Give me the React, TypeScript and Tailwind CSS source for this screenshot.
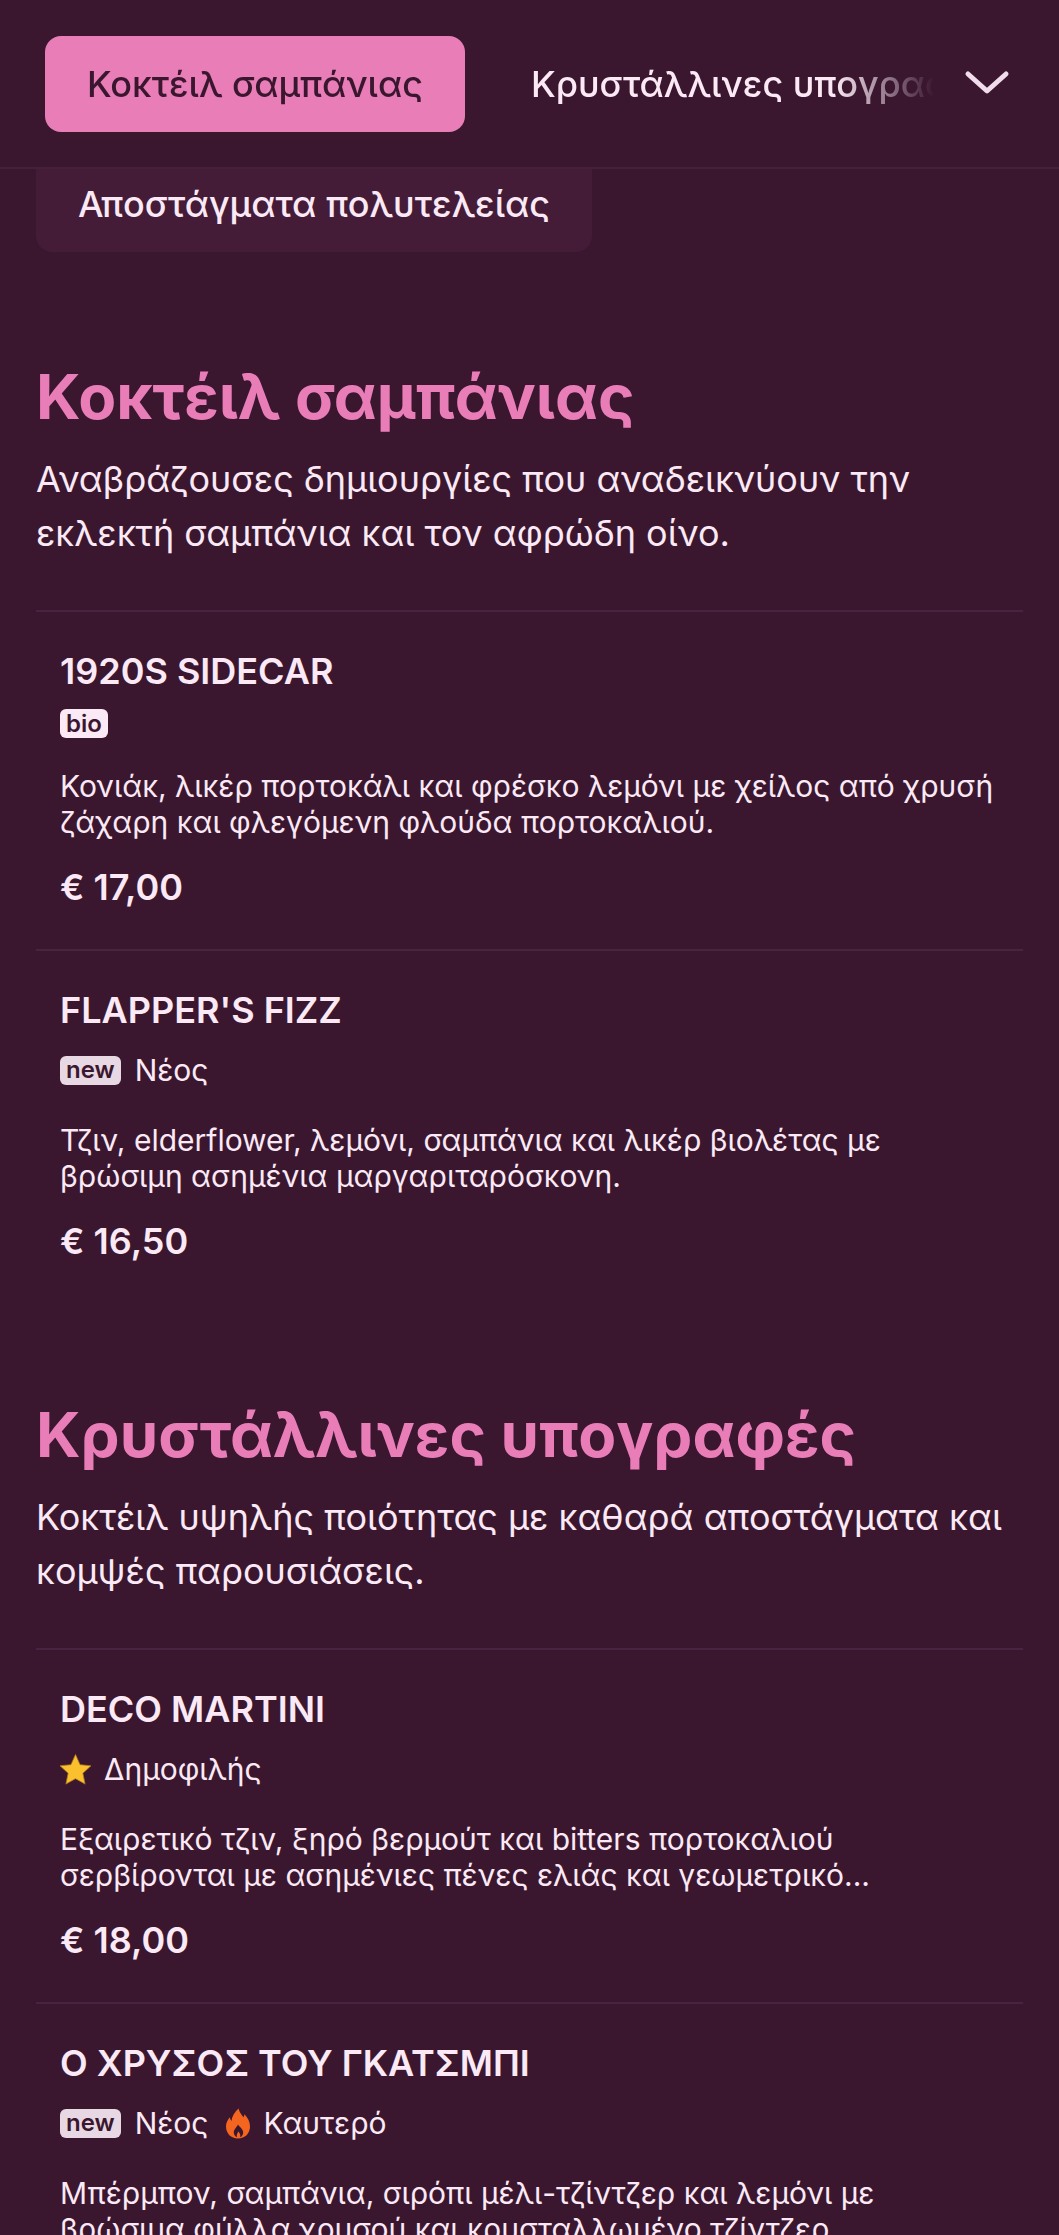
import React from "react";

type Tag = "bio" | "new" | "popular" | "hot";

type Item = {
  name: string;
  tags: Tag[];
  desc: string;
  price: string;
};

type Section = {
  title: string;
  intro: string;
  items: Item[];
};

const sections: Section[] = [
  {
    title: "Κοκτέιλ σαμπάνιας",
    intro:
      "Αναβράζουσες δημιουργίες που αναδεικνύουν την εκλεκτή σαμπάνια και τον αφρώδη οίνο.",
    items: [
      {
        name: "1920S SIDECAR",
        tags: ["bio"],
        desc: "Κονιάκ, λικέρ πορτοκάλι και φρέσκο λεμόνι με χείλος από χρυσή ζάχαρη και φλεγόμενη φλούδα πορτοκαλιού.",
        price: "€ 17,00",
      },
      {
        name: "FLAPPER'S FIZZ",
        tags: ["new"],
        desc: "Τζιν, elderflower, λεμόνι, σαμπάνια και λικέρ βιολέτας με βρώσιμη ασημένια μαργαριταρόσκονη.",
        price: "€ 16,50",
      },
    ],
  },
  {
    title: "Κρυστάλλινες υπογραφές",
    intro:
      "Κοκτέιλ υψηλής ποιότητας με καθαρά αποστάγματα και κομψές παρουσιάσεις.",
    items: [
      {
        name: "DECO MARTINI",
        tags: ["popular"],
        desc: "Εξαιρετικό τζιν, ξηρό βερμούτ και bitters πορτοκαλιού σερβίρονται με ασημένιες πένες ελιάς και γεωμετρικό...",
        price: "€ 18,00",
      },
      {
        name: "Ο ΧΡΥΣΟΣ ΤΟΥ ΓΚΑΤΣΜΠΙ",
        tags: ["new", "hot"],
        desc: "Μπέρμπον, σαμπάνια, σιρόπι μέλι-τζίντζερ και λεμόνι με βρώσιμα φύλλα χρυσού και κρυσταλλωμένο τζίντζερ.",
        price: "€ 19,00",
      },
    ],
  },
];

function Star() {
  return (
    <svg viewBox="1.5 1.5 21 21" className="h-[31px] w-[31px] shrink-0">
      <path
        d="M12 1.800l3.100 6.900 7.400.8-5.500 5 1.500 7.400L12 18.200l-6.500 3.700L7 14.500l-5.500-5 7.400-.8z"
        fill="#fbc02d"
        stroke="#a9791c"
        strokeWidth="0.5"
        strokeLinejoin="round"
      />
    </svg>
  );
}

function Flame() {
  return (
    <svg viewBox="0 0 24 30" className="h-[31px] w-[24px] shrink-0">
      <path
        fillRule="evenodd"
        d="M12.500 0c1 4.200 3.300 6.300 5 8.700.6-.9.9-1.800 1-2.900 3.200 3.400 5.500 7.500 5.500 12.200C24 25 19 30 12 30S0 25 0 18c0-3.600 1.700-6.800 3.800-9.200.2 1.500.7 2.700 1.600 3.600C6.100 7.700 8.700 3.300 12.500 0zM12 16c-1 2.400-4.200 4.600-4.200 8.100 0 2.200 1.500 4 3.300 4.700-.9-2.300.1-4.200 1.500-5.800.9 1.700 2.300 3.400 1.500 5.700 2-.7 3.100-2.500 3.100-4.600 0-3.500-3.500-5.300-5.200-8.100z"
        fill="#f4651f"
      />
    </svg>
  );
}

function TagView({ tag }: { tag: Tag }) {
  if (tag === "bio") {
    return (
      <span className="flex h-[29px] items-center rounded-[6px] bg-[#fbe9f5] px-[6px] text-[24px] font-semibold leading-none text-[#3a172f]">
        bio
      </span>
    );
  }
  if (tag === "new") {
    return (
      <span className="flex items-center gap-[14px]">
        <span className="flex h-[29px] items-center rounded-[6px] bg-[#e8d8e3] px-[6px] text-[24px] font-semibold leading-none text-[#3a172f]">
          new
        </span>
        <span>Νέος</span>
      </span>
    );
  }
  if (tag === "popular") {
    return (
      <span className="flex items-center gap-[13px]">
        <Star />
        <span>Δημοφιλής</span>
      </span>
    );
  }
  return (
    <span className="flex items-center gap-[13px]">
      <Flame />
      <span>Καυτερό</span>
    </span>
  );
}

function MenuItem({ item }: { item: Item }) {
  return (
    <div className="border-t-2 border-[#4a2340] px-[24px] pt-[39px] pb-[40px]">
      <h3 className="text-[36px] font-semibold leading-[40px] text-[#fbe9f5]">
        {item.name}
      </h3>
      <div className="mt-[18px] flex items-center gap-[18px] text-[30px] leading-[44px] text-[#fbe9f5]">
        {item.tags.map((t) => (
          <TagView key={t} tag={t} />
        ))}
      </div>
      <p className="mt-[30px] text-[30px] leading-[36px] text-[#fbe9f5]">
        {item.desc}
      </p>
      <div className="mt-[25px] text-[36px] font-semibold leading-[44px] text-[#fbe9f5]">
        {item.price}
      </div>
    </div>
  );
}

export default function App() {
  return (
    <div className="h-[2235px] w-[1059px] overflow-hidden bg-[#3a172f] font-['Inter',sans-serif]">
      <header className="relative z-10 flex h-[169px] items-center border-b-2 border-[#442039] bg-[#3a172f] pl-[45px] pr-[48px]">
        <div className="flex min-w-0 flex-1 gap-[24px] overflow-hidden [mask-image:linear-gradient(to_right,black_88%,transparent_99%)]">
          <button className="h-[96px] shrink-0 rounded-[16px] bg-[#e87db8] px-[42px] text-[36px] font-medium text-[#3a172f]">
            Κοκτέιλ σαμπάνιας
          </button>
          <button className="h-[96px] shrink-0 px-[42px] text-[36px] font-medium text-[#fbe9f5]">
            Κρυστάλλινες υπογραφές
          </button>
        </div>
        <svg viewBox="0 0 48 30" fill="none" className="ml-[20px] h-[30px] w-[48px] shrink-0">
          <path d="M5 5l19 17L43 5" stroke="#f0dcea" strokeWidth="5" strokeLinecap="round" strokeLinejoin="round" />
        </svg>
      </header>

      <main className="-mt-[13px] px-[36px]">
        <button className="h-[96px] rounded-[16px] bg-[#441c38] px-[42px] text-[36px] font-medium text-[#fbe9f5]">
          Αποστάγματα πολυτελείας
        </button>

        {sections.map((s, i) => (
          <section key={s.title} className={i === 0 ? "mt-[107px]" : "mt-[94px]"}>
            <h2 className="text-[62px] font-bold leading-[76px] text-[#e87db8]">
              {s.title}
            </h2>
            <p className="mt-[17px] text-[36px] leading-[54px] text-[#fbe9f5]">
              {s.intro}
            </p>
            <div className="mt-[50px]">
              {s.items.map((it) => (
                <MenuItem key={it.name} item={it} />
              ))}
            </div>
          </section>
        ))}
      </main>
    </div>
  );
}
